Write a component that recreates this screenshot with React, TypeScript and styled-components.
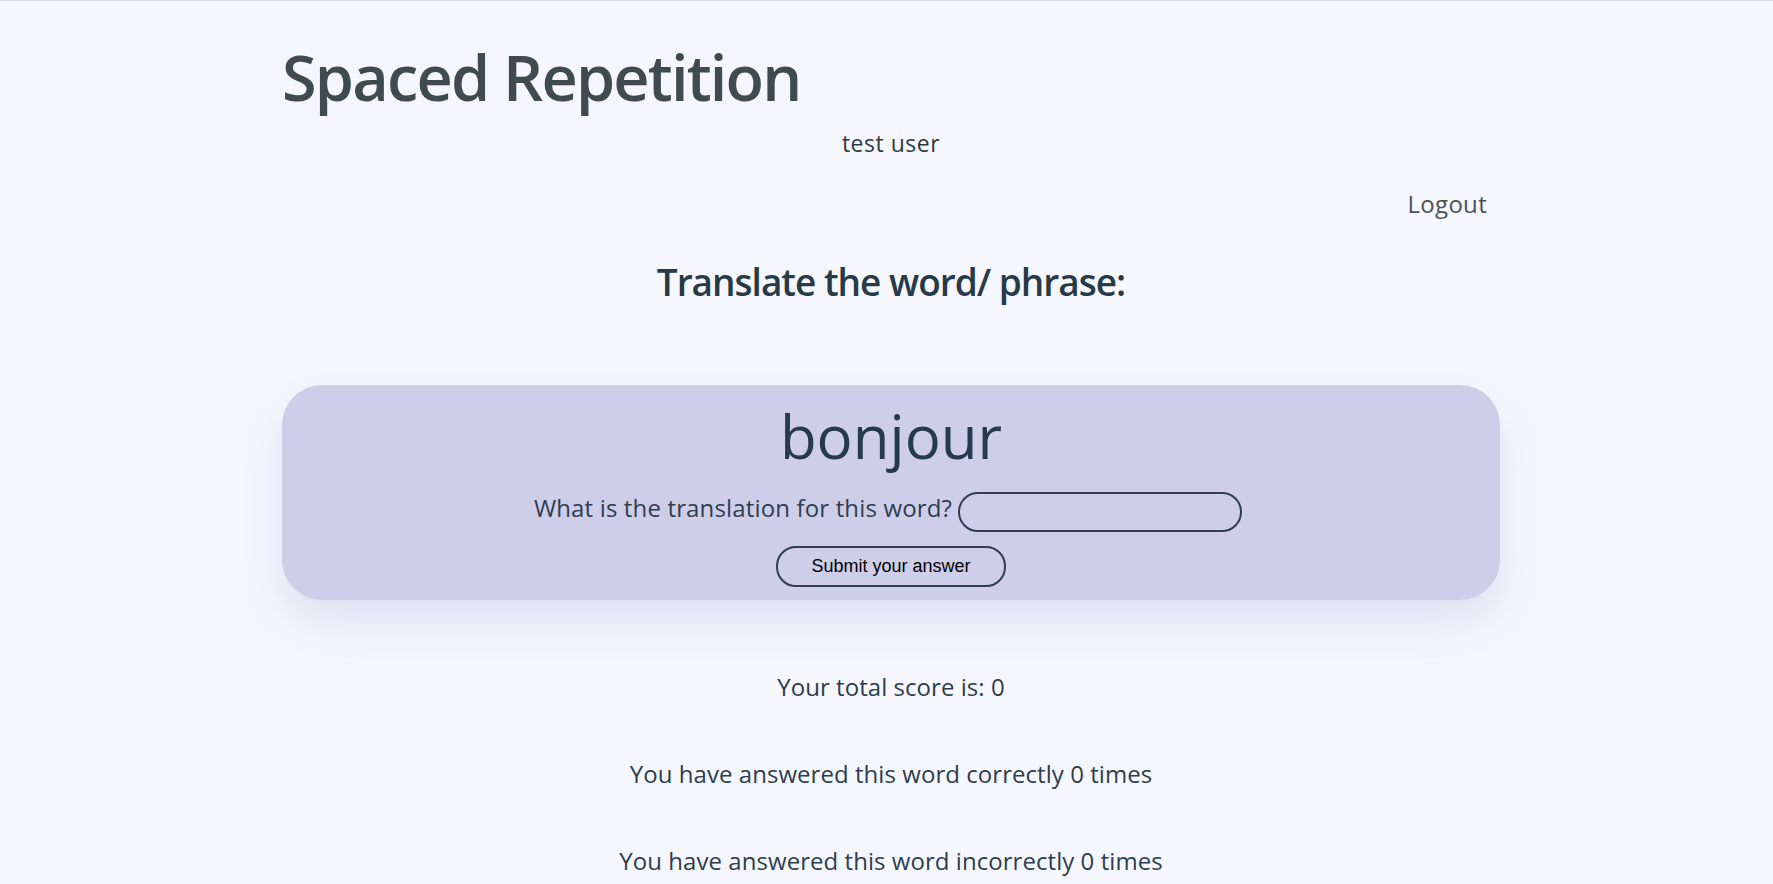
import React, {useState} from 'react';
import styled, {createGlobalStyle} from 'styled-components';

const GlobalStyle = createGlobalStyle`
  html, body {
    margin: 0;
    padding: 0;
    background: #f6f7fd;
  }
  body {
    font-family: "Open Sans", "Noto Sans", sans-serif;
    color: #2c3e50;
    border-top: 1px solid #d9dbe2;
  }
`;

const Page = styled.div`
  width: 1218px;
  margin-left: 282px;
  padding-bottom: 40px;
`;

const Header = styled.header`
  display: flex;
  flex-direction: column;
`;

const Title = styled.h1`
  margin: 43px 0 0 0;
  font-size: 63px;
  line-height: 66px;
  font-weight: 600;
  color: #3f4b4e;
  letter-spacing: -1.8px;
`;

const UserName = styled.span`
  margin-top: 22px;
  align-self: center;
  font-size: 23px;
  line-height: 22px;
  color: #2f3a40;
  letter-spacing: 0.5px;
`;

const Nav = styled.nav`
  margin-top: 38px;
  display: flex;
  justify-content: flex-end;
  padding-right: 13px;
`;

const LogoutLink = styled.a`
  font-size: 24px;
  line-height: 24px;
  color: #4a5158;
  text-decoration: none;
  letter-spacing: 0.3px;
  cursor: pointer;
`;

const Heading = styled.h2`
  margin: 46px 0 0 0;
  text-align: center;
  font-size: 37px;
  line-height: 39px;
  font-weight: 600;
  color: #263a47;
  letter-spacing: -1px;
`;

const Card = styled.section`
  margin-top: 84px;
  background: #cfcee9;
  border-radius: 40px;
  box-shadow: 0 22px 44px rgba(150, 150, 210, 0.24);
  padding: 21px 0 13px;
  display: flex;
  flex-direction: column;
  align-items: center;
`;

const Word = styled.h3`
  margin: 0;
  font-size: 60px;
  line-height: 60px;
  font-weight: 400;
  color: #263a4e;
`;

const AnswerForm = styled.form`
  display: flex;
  flex-direction: column;
  align-items: center;
  gap: 14px;
  margin-top: 26px;
`;

const Row = styled.div`
  display: flex;
  align-items: center;
  gap: 6px;
  margin-right: 6px;
`;

const Label = styled.label`
  font-size: 24px;
  line-height: 24px;
  margin-bottom: 8px;
  color: #2c3e50;
  letter-spacing: 0.15px;
`;

const Input = styled.input`
  box-sizing: border-box;
  width: 284px;
  height: 40px;
  border: 2px solid #2c3e50;
  border-radius: 20px;
  background: transparent;
  padding: 0 14px;
  font-size: 18px;
  outline: none;
`;

const SubmitButton = styled.button`
  box-sizing: border-box;
  width: 230px;
  height: 41px;
  border: 2px solid #2c3e50;
  border-radius: 20px;
  background: transparent;
  font-family: "Liberation Sans", Arial, sans-serif;
  font-size: 18px;
  color: #000;
  cursor: pointer;
`;

const Stat = styled.p<{ $first?: boolean }>`
  margin: ${p => (p.$first ? '75px' : '63px')} 0 0;
  text-align: center;
  font-size: 24px;
  line-height: 24px;
  color: #2c3e50;
  letter-spacing: 0.05px;
`;

function App() {
  const [answer, setAnswer] = useState('');
  const stats = {total: 0, correct: 0, incorrect: 0};

  return (
    <>
      <GlobalStyle/>
      <Page>
        <Header>
          <Title>Spaced Repetition</Title>
          <UserName>test user</UserName>
          <Nav>
            <LogoutLink>Logout</LogoutLink>
          </Nav>
        </Header>
        <main>
          <Heading>Translate the word/ phrase:</Heading>
          <Card>
            <Word>bonjour</Word>
            <AnswerForm onSubmit={e => e.preventDefault()}>
              <Row>
                <Label htmlFor="guess">What is the translation for this word?</Label>
                <Input id="guess" value={answer} onChange={e => setAnswer(e.target.value)}/>
              </Row>
              <SubmitButton type="submit">Submit your answer</SubmitButton>
            </AnswerForm>
          </Card>
          <Stat $first>Your total score is: {stats.total}</Stat>
          <Stat>You have answered this word correctly {stats.correct} times</Stat>
          <Stat>You have answered this word incorrectly {stats.incorrect} times</Stat>
        </main>
      </Page>
    </>
  );
}

export default App;
